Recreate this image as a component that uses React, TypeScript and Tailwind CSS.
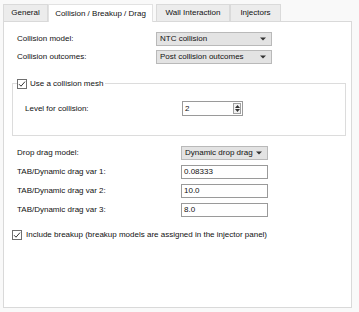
import React from 'react';

const font = { fontFamily: '"Liberation Sans", Arial, sans-serif' };

function Arrow() {
  return (
    <svg width="6" height="4" viewBox="0 0 6 4" className="shrink-0">
      <path d="M0 0.5h6L3 3.5z" fill="#333" />
    </svg>
  );
}

function Combo({ text, w }: { text: string; w: string }) {
  return (
    <div className={`${w} h-[14px] flex items-center justify-between pl-[3px] pr-[5px] bg-[#e3e3e3] border border-[#b9b9b9] text-[8px] text-[#111] whitespace-nowrap`}>
      <span>{text}</span>
      <Arrow />
    </div>
  );
}

function Field({ value }: { value: string }) {
  return (
    <div className="w-[87px] h-[14px] flex items-center pl-[2px] bg-white border border-[#9a9a9a] text-[8px] text-[#111]">
      {value}
    </div>
  );
}

function Check() {
  return (
    <div className="w-[10px] h-[10px] border border-[#6f6f6f] bg-white flex items-center justify-center shrink-0">
      <svg width="8" height="8" viewBox="0 0 8 8">
        <path d="M1 4.2l2 2L7 1.6" stroke="#333" strokeWidth="1" fill="none" />
      </svg>
    </div>
  );
}

function Tab({ label, w, active }: { label: string; w: string; active?: boolean }) {
  return (
    <div
      className={`${w} flex items-center justify-center text-[8px] text-[#111] border-t border-l border-r whitespace-nowrap ${
        active ? 'h-[18px] bg-white border-[#e2e2e2] -mb-px relative z-10' : 'h-[17px] bg-[#ececec] border-[#dadada]'
      }`}
    >
      {label}
    </div>
  );
}

export default function App() {
  return (
    <div className="w-[359px] h-[312px] bg-[#f9f9f9] pl-[3px] pt-[3px]" style={font}>
      {/* Tabs */}
      <div className="flex items-end h-[18px]">
        <Tab label="General" w="w-[45px]" />
        <Tab label="Collision / Breakup / Drag" w="w-[105px]" active />
        <div className="w-[3px]" />
        <Tab label="Wall Interaction" w="w-[74px]" />
        <Tab label="Injectors" w="w-[51px]" />
      </div>

      {/* Panel */}
      <div className="w-[349px] h-[287px] bg-white border border-[#d9d9d9] relative">
        <div className="pl-[13px] pt-[10px] flex flex-col">
          <div className="flex items-center h-[14px]">
            <span className="w-[139px] text-[8px] text-[#111]">Collision model:</span>
            <Combo text="NTC collision" w="w-[116px]" />
          </div>
          <div className="flex items-center h-[14px] mt-[4px]">
            <span className="w-[139px] text-[8px] text-[#111]">Collision outcomes:</span>
            <Combo text="Post collision outcomes" w="w-[116px]" />
          </div>
        </div>

        {/* Group box */}
        <div className="relative ml-[8px] mt-[19px] w-[334px] h-[53px] border border-[#dcdcdc]">
          <div className="absolute -top-[6px] left-[4px] flex items-center gap-[3px] bg-white pr-[2px] text-[8px] text-[#111]">
            <Check />
            <span>Use a collision mesh</span>
          </div>
          <div className="flex items-center mt-[17px] pl-[12px]">
            <span className="w-[157px] text-[8px] text-[#111]">Level for collision:</span>
            <div className="w-[61px] h-[15px] flex items-center justify-between pl-[2px] pr-[1px] bg-white border border-[#9a9a9a] text-[8px] text-[#111]">
              <span>2</span>
              <div className="w-[8px] h-[11px] border border-[#a0a0a0] bg-[#f2f2f2] flex flex-col items-center justify-around">
                <svg width="5" height="3" viewBox="0 0 5 3"><path d="M0 3h5L2.5 0z" fill="#333" /></svg>
                <svg width="5" height="3" viewBox="0 0 5 3"><path d="M0 0h5L2.5 3z" fill="#333" /></svg>
              </div>
            </div>
          </div>
        </div>

        <div className="pl-[13px] mt-[10px] flex flex-col gap-[5px]">
          <div className="flex items-center h-[14px]">
            <span className="w-[164px] text-[8px] text-[#111]">Drop drag model:</span>
            <Combo text="Dynamic drop drag" w="w-[87px]" />
          </div>
          <div className="flex items-center h-[14px]">
            <span className="w-[164px] text-[8px] text-[#111]">TAB/Dynamic drag var 1:</span>
            <Field value="0.08333" />
          </div>
          <div className="flex items-center h-[14px]">
            <span className="w-[164px] text-[8px] text-[#111]">TAB/Dynamic drag var 2:</span>
            <Field value="10.0" />
          </div>
          <div className="flex items-center h-[14px]">
            <span className="w-[164px] text-[8px] text-[#111]">TAB/Dynamic drag var 3:</span>
            <Field value="8.0" />
          </div>
        </div>

        <div className="flex items-center gap-[4px] pl-[8px] mt-[12px] text-[8px] text-[#111]">
          <Check />
          <span>Include breakup (breakup models are assigned in the injector panel)</span>
        </div>
      </div>
    </div>
  );
}
